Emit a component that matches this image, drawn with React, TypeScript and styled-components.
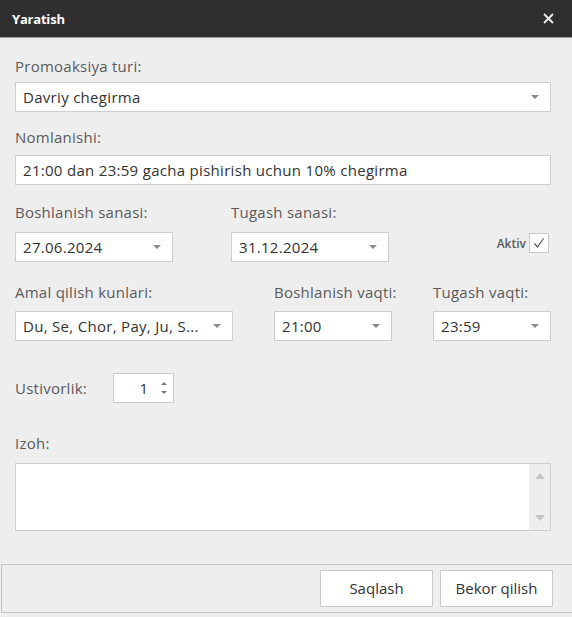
import React from 'react';
import styled, { createGlobalStyle } from 'styled-components';

const GlobalStyle = createGlobalStyle`
  html, body {
    margin: 0;
    padding: 0;
    background: #f5f5f5;
  }
  * {
    box-sizing: border-box;
  }
`;

const Window = styled.div`
  width: 572px;
  height: 617px;
  background: #eeeeee;
  font-family: 'Open Sans', 'Noto Sans', sans-serif;
  display: flex;
  flex-direction: column;
`;

const TitleBar = styled.div`
  height: 38px;
  background: #2f2f2f;
  border-bottom: 1px solid #9a9a9a;
  display: flex;
  align-items: center;
  justify-content: space-between;
  padding: 0 18px 0 12px;
`;

const Title = styled.div`
  color: #ffffff;
  font-size: 13px;
  font-weight: 700;
  letter-spacing: -0.2px;
`;

const CloseButton = styled.div`
  width: 12px;
  height: 12px;
  display: flex;
  align-items: center;
  justify-content: center;
`;

const Body = styled.div`
  flex: 1;
  padding: 19px 21px 0 15px;
  display: flex;
  flex-direction: column;
`;

const Section = styled.div<{ top: number }>`
  margin-top: ${p => p.top}px;
  display: flex;
  flex-direction: column;
`;

const Label = styled.div<{ gap?: number }>`
  font-size: 15px;
  line-height: 18px;
  letter-spacing: 0.25px;
  color: #5a5a5a;
  margin-bottom: ${p => (p.gap ?? 11)}px;
  white-space: nowrap;
`;

const Row = styled.div`
  display: flex;
  align-items: flex-start;
`;

const Column = styled.div<{ width: number; space?: number }>`
  width: ${p => p.width}px;
  margin-right: ${p => p.space ?? 0}px;
  display: flex;
  flex-direction: column;
`;

const Box = styled.div<{ width?: number }>`
  width: ${p => (p.width ? `${p.width}px` : '100%')};
  height: 30px;
  background: #ffffff;
  border: 1px solid #cdcdcd;
  display: flex;
  align-items: center;
  padding: 0 11px 0 7px;
  font-size: 15px;
  letter-spacing: 0.3px;
  color: #333333;
`;

const BoxText = styled.span`
  flex: 1;
  white-space: nowrap;
  overflow: hidden;
`;

const Caret = styled.span`
  width: 0;
  height: 0;
  border-left: 4px solid transparent;
  border-right: 4px solid transparent;
  border-top: 4px solid #8a8a8a;
`;

const AktivWrap = styled.div`
  margin-left: auto;
  margin-right: 2px;
  margin-top: 30px;
  display: flex;
  align-items: center;
  gap: 3px;
`;

const AktivLabel = styled.span`
  font-size: 12px;
  font-weight: 600;
  color: #5a5a5a;
`;

const CheckBox = styled.div`
  width: 20px;
  height: 20px;
  background: #ffffff;
  border: 1px solid #c8c8c8;
  display: flex;
  align-items: center;
  justify-content: center;
`;

const SpinRow = styled.div`
  display: flex;
  align-items: center;
`;

const SpinLabel = styled.div`
  width: 98px;
  font-size: 15px;
  letter-spacing: 0.25px;
  color: #5a5a5a;
`;

const Spinner = styled.div`
  width: 61px;
  height: 30px;
  background: #ffffff;
  border: 1px solid #cdcdcd;
  display: flex;
  align-items: center;
  justify-content: flex-end;
  padding-right: 6px;
  font-size: 15px;
  color: #333333;
`;

const SpinArrows = styled.div`
  display: flex;
  flex-direction: column;
  gap: 6px;
  margin-left: 13px;
`;

const Arrow = styled.span<{ up?: boolean }>`
  width: 0;
  height: 0;
  border-left: 3px solid transparent;
  border-right: 3px solid transparent;
  ${p => (p.up ? 'border-bottom: 3px solid #7a7a7a;' : 'border-top: 3px solid #7a7a7a;')}
`;

const TextArea = styled.div`
  width: 536px;
  height: 68px;
  background: #ffffff;
  border: 1px solid #cdcdcd;
  display: flex;
  justify-content: flex-end;
`;

const ScrollBar = styled.div`
  width: 21px;
  background: #eeeeee;
  display: flex;
  flex-direction: column;
  align-items: center;
  justify-content: space-between;
  padding: 9px 0 9px;
`;

const ScrollArrow = styled.span<{ up?: boolean }>`
  width: 0;
  height: 0;
  border-left: 5px solid transparent;
  border-right: 5px solid transparent;
  ${p => (p.up ? 'border-bottom: 6px solid #c4c4c4;' : 'border-top: 6px solid #c4c4c4;')}
`;

const Footer = styled.div`
  margin: 0 0 4px 1px;
  height: 49px;
  border: 1px solid #c6c6c6;
  border-right: none;
  background: #eeeeee;
  display: flex;
  justify-content: flex-end;
  align-items: center;
  gap: 7px;
  padding: 0 19px 1px 0;
`;

const Button = styled.button`
  width: 113px;
  height: 37px;
  background: #ffffff;
  border: 1px solid #cacaca;
  font-family: inherit;
  font-size: 15px;
  color: #333333;
  padding: 0;
`;

const DropBox = ({ value, width }: { value: string; width?: number }) => (
  <Box width={width}>
    <BoxText>{value}</BoxText>
    <Caret />
  </Box>
);

export default function App() {
  return (
    <>
      <GlobalStyle />
      <Window>
        <TitleBar>
          <Title>Yaratish</Title>
          <CloseButton>
            <svg width="11" height="11" viewBox="0 0 11 11">
              <path d="M1 1 L10 10 M10 1 L1 10" stroke="#e6e6e6" strokeWidth="2" />
            </svg>
          </CloseButton>
        </TitleBar>
        <Body>
          <Section top={0}>
            <Label gap={7}>Promoaksiya turi:</Label>
            <DropBox value="Davriy chegirma" />
          </Section>

          <Section top={16}>
            <Label gap={9}>Nomlanishi:</Label>
            <Box>
              <BoxText>21:00 dan 23:59 gacha pishirish uchun 10% chegirma</BoxText>
            </Box>
          </Section>

          <Section top={18}>
            <Row>
              <Column width={158} space={58}>
                <Label>Boshlanish sanasi:</Label>
                <DropBox value="27.06.2024" />
              </Column>
              <Column width={158}>
                <Label>Tugash sanasi:</Label>
                <DropBox value="31.12.2024" />
              </Column>
              <AktivWrap>
                <AktivLabel>Aktiv</AktivLabel>
                <CheckBox>
                  <svg width="12" height="12" viewBox="0 0 12 12">
                    <path d="M1.5 6.5 L4.5 10 L10.5 1.5" stroke="#555" strokeWidth="1.2" fill="none" />
                  </svg>
                </CheckBox>
              </AktivWrap>
            </Row>
          </Section>

          <Section top={21}>
            <Row>
              <Column width={218} space={41}>
                <Label gap={10}>Amal qilish kunlari:</Label>
                <DropBox value="Du, Se, Chor, Pay, Ju, S..." />
              </Column>
              <Column width={118} space={41}>
                <Label gap={10}>Boshlanish vaqti:</Label>
                <DropBox value="21:00" />
              </Column>
              <Column width={118}>
                <Label gap={10}>Tugash vaqti:</Label>
                <DropBox value="23:59" />
              </Column>
            </Row>
          </Section>

          <Section top={32}>
            <SpinRow>
              <SpinLabel>Ustivorlik:</SpinLabel>
              <Spinner>
                1
                <SpinArrows>
                  <Arrow up />
                  <Arrow />
                </SpinArrows>
              </Spinner>
            </SpinRow>
          </Section>

          <Section top={31}>
            <Label gap={11}>Izoh:</Label>
            <TextArea>
              <ScrollBar>
                <ScrollArrow up />
                <ScrollArrow />
              </ScrollBar>
            </TextArea>
          </Section>
        </Body>
        <Footer>
          <Button>Saqlash</Button>
          <Button>Bekor qilish</Button>
        </Footer>
      </Window>
    </>
  );
}
